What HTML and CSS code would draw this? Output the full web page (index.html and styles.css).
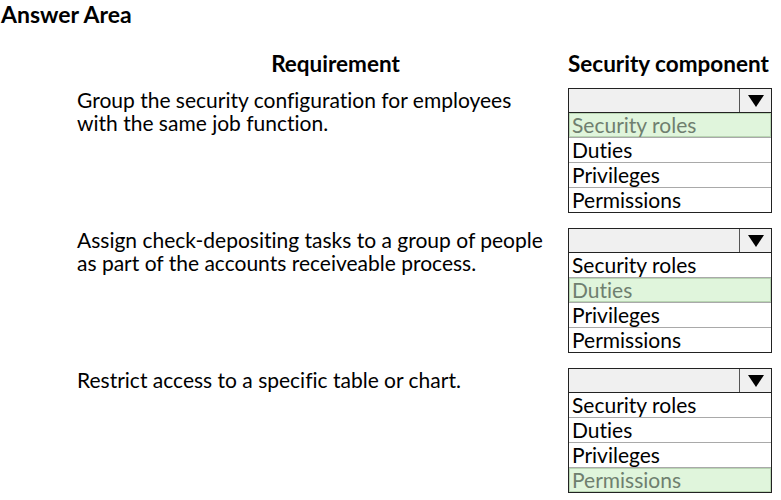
FILE: index.html
```html
<!DOCTYPE html>
<html>
<head>
<meta charset="utf-8">
<link rel="stylesheet" href="styles.css">
</head>
<body>
<div class="page">
  <h1 class="title">Answer Area</h1>
  <div class="heads">
    <div class="col-head req-head">Requirement</div>
    <div class="col-head comp-head">Security component</div>
  </div>
  <div class="grid">
    <div class="req">Group the security configuration for employees<br>with the same job function.</div>
    <div class="select">
      <div class="select-box"><span class="select-value"></span><span class="select-arrow"><svg width="16" height="12" viewBox="0 0 16 12"><path d="M0 0H16L8 12Z" fill="#000"/></svg></span></div>
      <ul class="options">
        <li class="opt picked">Security roles</li>
        <li class="opt">Duties</li>
        <li class="opt">Privileges</li>
        <li class="opt">Permissions</li>
      </ul>
    </div>

    <div class="req">Assign check-depositing tasks to a group of people<br>as part of the accounts receiveable process.</div>
    <div class="select">
      <div class="select-box"><span class="select-value"></span><span class="select-arrow"><svg width="16" height="12" viewBox="0 0 16 12"><path d="M0 0H16L8 12Z" fill="#000"/></svg></span></div>
      <ul class="options">
        <li class="opt">Security roles</li>
        <li class="opt picked">Duties</li>
        <li class="opt">Privileges</li>
        <li class="opt">Permissions</li>
      </ul>
    </div>

    <div class="req">Restrict access to a specific table or chart.</div>
    <div class="select">
      <div class="select-box"><span class="select-value"></span><span class="select-arrow"><svg width="16" height="12" viewBox="0 0 16 12"><path d="M0 0H16L8 12Z" fill="#000"/></svg></span></div>
      <ul class="options">
        <li class="opt">Security roles</li>
        <li class="opt">Duties</li>
        <li class="opt">Privileges</li>
        <li class="opt picked">Permissions</li>
      </ul>
    </div>
  </div>
</div>
</body>
</html>
```

FILE: styles.css
```css
html, body {
  margin: 0;
  padding: 0;
  background: #fff;
}
body {
  font-family: Lato, "Open Sans", sans-serif;
  font-variant-ligatures: none;
  color: #000;
  width: 781px;
  height: 500px;
  overflow: hidden;
}
.page {
  padding: 2px 0 0 1px;
}
.title {
  margin: 0;
  font-size: 23px;
  font-weight: 700;
  line-height: 24px;
}
.heads {
  display: grid;
  grid-template-columns: 491px 204px;
  padding-left: 76px;
  margin-top: 26px;
  height: 36px;
}
.grid {
  display: grid;
  grid-template-columns: 491px 204px;
  padding-left: 76px;
  row-gap: 15px;
}
.col-head {
  font-weight: 700;
  font-size: 22.5px;
  line-height: 24px;
}
.req-head {
  text-align: center;
  padding-left: 26px;
}
.req {
  font-size: 21px;
  line-height: 23px;
}
.select {
  width: 204px;
}
.select-box {
  display: flex;
  height: 23px;
  border: 1px solid #222;
  background: #f0f0f0;
}
.select-value {
  flex: 1;
}
.select-arrow {
  width: 31px;
  border-left: 1px solid #555;
  display: flex;
  align-items: center;
  justify-content: center;
}
.options {
  list-style: none;
  margin: 0;
  padding: 0;
  border: 1px solid #222;
  border-top: none;
}
.opt {
  height: 24px;
  line-height: 24px;
  font-size: 21px;
  padding-left: 3px;
  border-top: 1px solid #a9a9a9;
}
.opt:first-child {
  border-top: none;
}
.opt.picked {
  background: #e0f5dc;
  color: #6f7f6f;
  box-shadow: inset 0 0 0 1px #b9d6b3;
}
```
